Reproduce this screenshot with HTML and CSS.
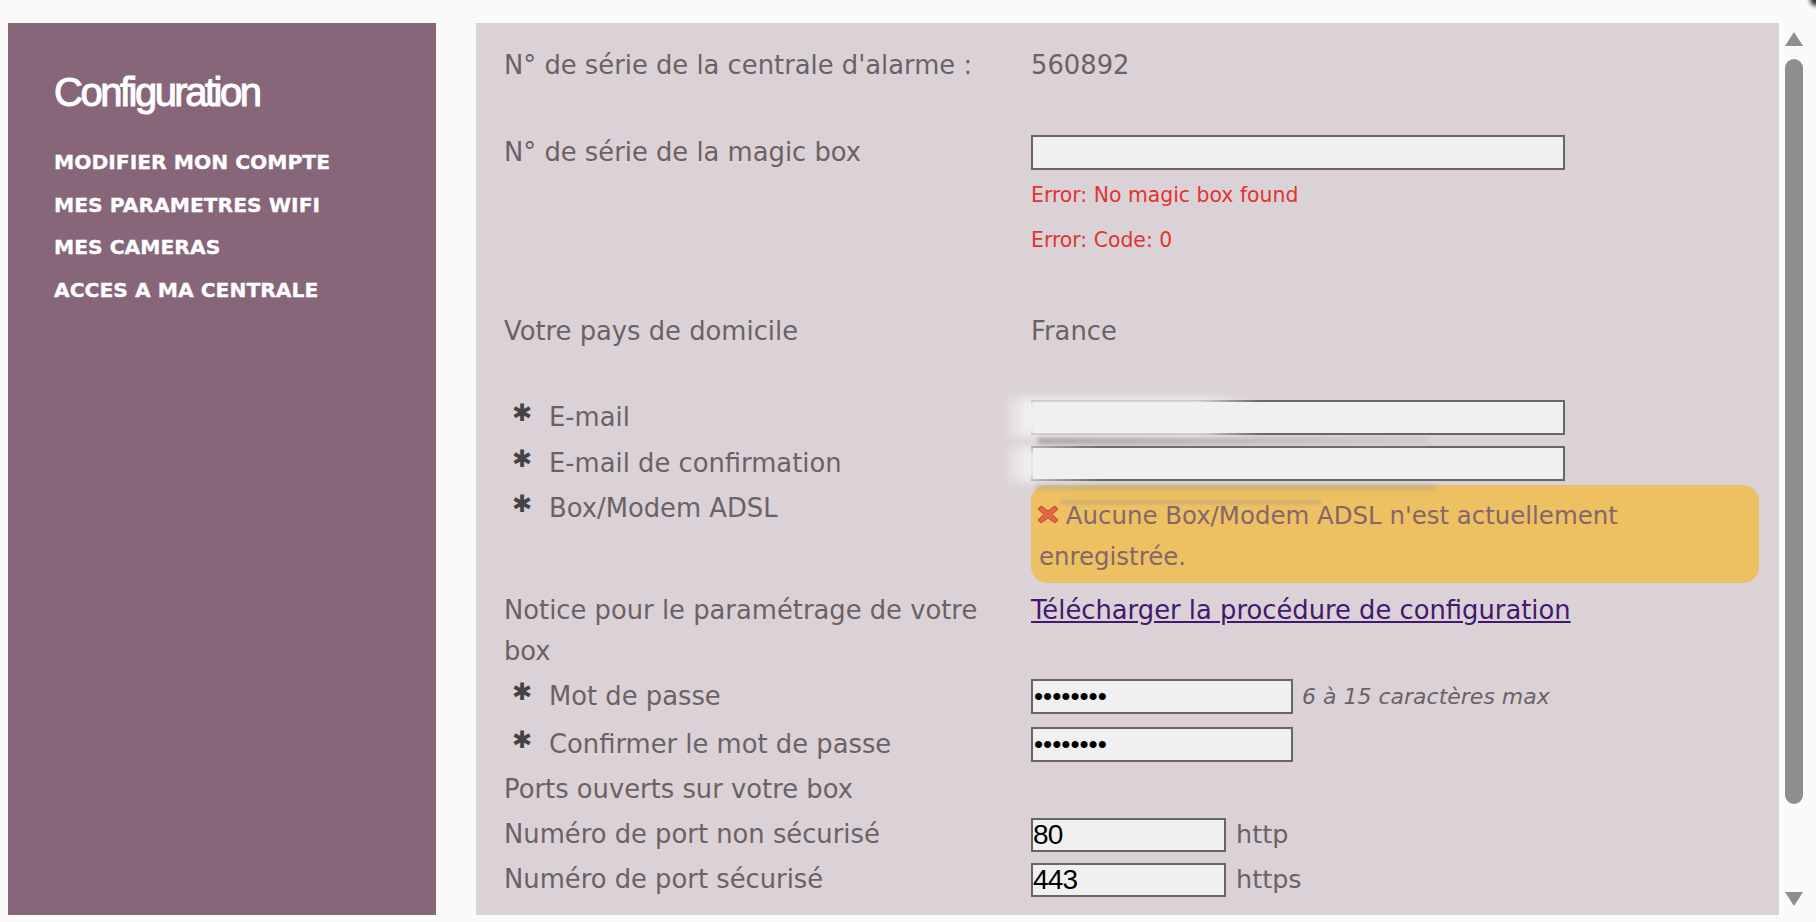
FILE: index.html
```html
<!DOCTYPE html>
<html lang="fr">
  <head>
    <meta charset="UTF-8" />
    <title>Configuration</title>
    <link rel="stylesheet" href="styles.css">
  </head>
  <body>
    <div class="corner"></div>

    <!-- Menu -->
    <div class="sidebar">
      <h1>Configuration</h1>
      <a class="nav-link" href="#">MODIFIER MON COMPTE</a>
      <a class="nav-link" href="#">MES PARAMETRES WIFI</a>
      <a class="nav-link" href="#">MES CAMERAS</a>
      <a class="nav-link" href="#">ACCES A MA CENTRALE</a>
    </div>

    <!-- Form -->
    <div class="panel">
      <div class="row">
        <div class="label">N° de série de la centrale d'alarme :</div>
        <div>560892</div>
      </div>

      <div class="row row-magic">
        <div class="label">N° de série de la magic box</div>
        <div>
          <input class="field field-long" type="text" />
          <div class="error">Error: No magic box found</div>
          <div class="error">Error: Code: 0</div>
        </div>
      </div>

      <div class="row row-country">
        <div class="label">Votre pays de domicile</div>
        <div>France</div>
      </div>

      <div class="row row-email">
        <div class="label"><span class="star">✱</span>E-mail</div>
        <div class="cell-field"><input class="field field-long" type="text" /></div>
      </div>
      <div class="row row-email2">
        <div class="label"><span class="star">✱</span>E-mail de confirmation</div>
        <div class="cell-field"><input class="field field-long" type="text" /></div>
      </div>

      <div class="row row-box">
        <div class="label"><span class="star">✱</span>Box/Modem ADSL</div>
        <div class="alert">
          <svg class="alert-icon" width="22" height="21" viewBox="0 0 22 21">
            <path d="M4 2 L11 7 L18 2 L21 5 L15 10.5 L21 16 L18 19 L11 14 L4 19 L1 16 L7 10.5 L1 5 Z" fill="#e2664a" stroke="#c9452e" stroke-width="1" />
          </svg>
          Aucune Box/Modem ADSL n'est actuellement enregistrée.
        </div>
      </div>

      <div class="row row-notice">
        <div class="label">Notice pour le paramétrage de votre box</div>
        <div><a class="download" href="#">Télécharger la procédure de configuration</a></div>
      </div>

      <div class="row row-pass">
        <div class="label"><span class="star">✱</span>Mot de passe</div>
        <div class="cell-field">
          <input class="field field-pass" type="password" value="12345678" />
          <em class="hint">6 à 15 caractères max</em>
        </div>
      </div>
      <div class="row row-pass2">
        <div class="label"><span class="star">✱</span>Confirmer le mot de passe</div>
        <div class="cell-field"><input class="field field-pass" type="password" value="12345678" /></div>
      </div>

      <div class="row row-ports">
        <div class="label">Ports ouverts sur votre box</div>
        <div></div>
      </div>
      <div class="row row-port">
        <div class="label">Numéro de port non sécurisé</div>
        <div class="cell-field"><input class="field field-port" type="text" value="80" /> <span class="unit">http</span></div>
      </div>
      <div class="row row-port">
        <div class="label">Numéro de port sécurisé</div>
        <div class="cell-field"><input class="field field-port" type="text" value="443" /> <span class="unit">https</span></div>
      </div>

      <!-- blurred out e-mail addresses -->
      <div class="smudge smudge-one"></div>
      <div class="smudge smudge-two"></div>
      <div class="smudge smudge-line"></div>
      <div class="smudge smudge-edge"></div>
      <div class="smudge smudge-ghost"></div>
    </div>

    <!-- Scrollbar -->
    <div class="scrollbar">
      <div class="arrow arrow-up"></div>
      <div class="thumb"></div>
      <div class="arrow arrow-down"></div>
    </div>
  </body>
</html>
```

FILE: styles.css
```css
body {
  margin: 0;
  height: 922px;
  padding: 23px 13px 7px 8px;
  box-sizing: border-box;
  overflow: hidden;
  background: #fafafa;
  color: #6b6266;
  font-family: "DejaVu Sans", sans-serif;
  font-size: 25.8px;
  display: flex;
  position: relative;
}

.corner {
  position: absolute;
  top: -8px;
  right: -6px;
  width: 12px;
  height: 14px;
  border-radius: 50%;
  background: #333;
  filter: blur(2px);
}

.sidebar {
  width: 428px;
  flex: none;
  box-sizing: border-box;
  padding: 45px 46px;
  background: #886679;
  color: #fff;
}

.sidebar h1 {
  margin: 0 0 25px;
  font-family: "Liberation Sans", sans-serif;
  font-size: 40px;
  line-height: 48px;
  font-weight: normal;
  letter-spacing: -2.5px;
  -webkit-text-stroke: 1px #fff;
}

.nav-link {
  display: block;
  height: 42.6px;
  line-height: 42.6px;
  color: #fff;
  font-size: 20.3px;
  font-weight: bold;
  text-decoration: none;
  -webkit-text-stroke: 0.3px #fff;
}

.panel {
  width: 1303px;
  flex: none;
  margin-left: 40px;
  box-sizing: border-box;
  padding: 22px 20px 0 28px;
  background: #dbd2d8;
  overflow: hidden;
  position: relative;
  line-height: 41px;
}

.row {
  display: grid;
  grid-template-columns: 527px 1fr;
}

.label {
  padding-right: 20px;
}

.star {
  display: inline-block;
  width: 45px;
  padding-left: 8px;
  box-sizing: border-box;
  color: #444;
  font-size: 24px;
  vertical-align: 5px;
  line-height: 20px;
}

.cell-field {
  display: flex;
  align-items: center;
  height: 41px;
}

.field {
  box-sizing: border-box;
  margin: 0;
  padding: 0;
  border: 2px solid #666;
  border-radius: 0;
  background: #f0f0f0;
  color: #000;
  font-family: "Liberation Sans", sans-serif;
  font-size: 28px;
  letter-spacing: -0.8px;
  outline: none;
  display: block;
}

.field-long {
  width: 534px;
  height: 35px;
}

.field-pass {
  width: 262px;
  height: 35px;
  padding-left: 1px;
  font-size: 26px;
  letter-spacing: 0;
}

.field-port {
  width: 195px;
  height: 34px;
}

.hint {
  margin-left: 9px;
  font-size: 22px;
}

.unit {
  margin-left: 10px;
  font-size: 25.5px;
}

.error {
  color: #e0352f;
  font-size: 20.4px;
  line-height: 45px;
}

.row-magic {
  margin-top: 46px;
}

.row-magic .field {
  margin: 3px 0;
}

.row-country {
  margin-top: 48px;
}

.row-email {
  margin-top: 45px;
}

.row-email2 {
  margin-top: 5px;
}

.row-box {
  margin-top: 4px;
}

.alert {
  height: 98px;
  box-sizing: border-box;
  margin-top: -3px;
  padding: 10px 8px 0;
  background: #edc162;
  border-radius: 16px;
  color: #86666b;
  font-size: 24.45px;
  line-height: 41px;
}

.alert-icon {
  vertical-align: -1px;
  margin: -6px -1px 0 -2px;
}

.row-notice {
  margin-top: 7px;
}

.download {
  color: #43196e;
}

.row-pass {
  margin-top: 4px;
}

.row-pass2 {
  margin-top: 7px;
}

.row-ports {
  margin-top: 4px;
}

.row-port {
  margin-top: 4px;
}

.smudge {
  position: absolute;
  filter: blur(4px);
}

.smudge-one {
  left: 525px;
  top: 375px;
  width: 260px;
  height: 39px;
  background: linear-gradient(to right, rgba(240, 240, 240, 0), #f0f0f0 26px, #f0f0f0 200px, rgba(240, 240, 240, 0));
}

.smudge-two {
  left: 525px;
  top: 423px;
  width: 100px;
  height: 36px;
  background: linear-gradient(to right, rgba(240, 240, 240, 0), #f0f0f0 26px, rgba(240, 240, 240, 0));
}

.smudge-line {
  left: 562px;
  top: 415px;
  width: 390px;
  height: 6px;
  background: linear-gradient(to right, #a8a2a6, #d0c8ce);
  filter: blur(2px);
}

.smudge-edge {
  left: 560px;
  top: 463px;
  width: 400px;
  height: 3px;
  background: #b5a88e;
  filter: blur(2px);
}

.smudge-ghost {
  left: 585px;
  top: 478px;
  width: 260px;
  height: 3px;
  background: #c9a878;
  filter: blur(1.5px);
}

.scrollbar {
  width: 18px;
  flex: none;
  margin-left: 6px;
  margin-top: 9px;
  margin-bottom: 2px;
  display: flex;
  flex-direction: column;
  align-items: center;
}

.arrow {
  width: 0;
  height: 0;
  border-left: 9px solid transparent;
  border-right: 9px solid transparent;
}

.arrow-up {
  border-bottom: 14px solid #8e8e8e;
}

.arrow-down {
  border-top: 14px solid #8e8e8e;
}

.thumb {
  width: 18px;
  height: 745px;
  margin: 13px 0 88px;
  border-radius: 9px;
  background: #8e8e8e;
}
```
